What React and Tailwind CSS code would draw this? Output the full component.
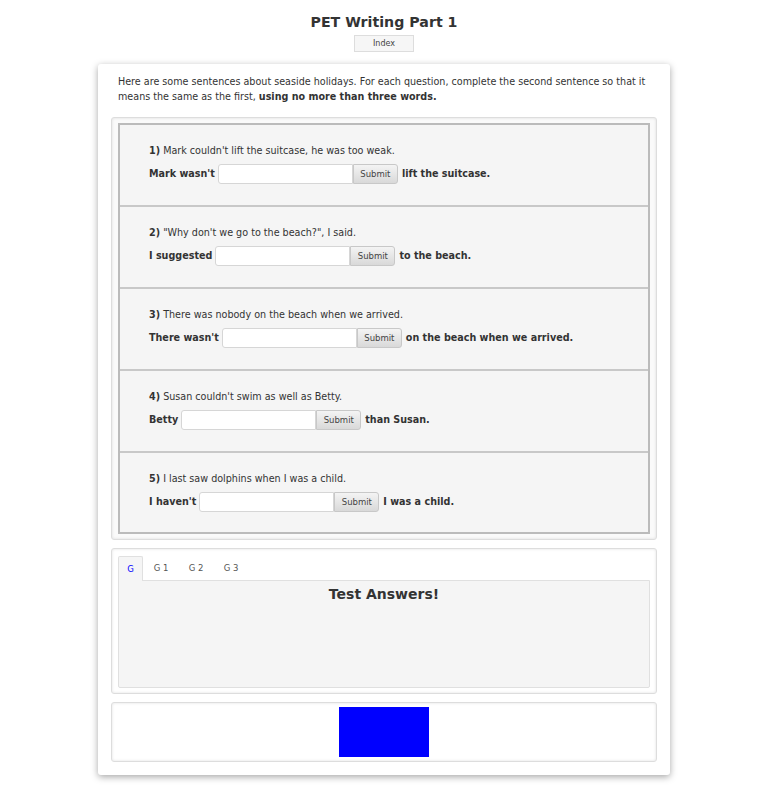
import React from "react";

const questions = [
  { n: "1)", q: "Mark couldn't lift the suitcase, he was too weak.", pre: "Mark wasn't", post: "lift the suitcase." },
  { n: "2)", q: "\"Why don't we go to the beach?\", I said.", pre: "I suggested", post: "to the beach." },
  { n: "3)", q: "There was nobody on the beach when we arrived.", pre: "There wasn't", post: "on the beach when we arrived." },
  { n: "4)", q: "Susan couldn't swim as well as Betty.", pre: "Betty", post: "than Susan." },
  { n: "5)", q: "I last saw dolphins when I was a child.", pre: "I haven't", post: "I was a child." },
];

export default function App() {
  return (
    <div className="min-h-[789px] bg-white text-[#333] font-['DejaVu_Sans',sans-serif] pb-[14px]">
      <div className="flex flex-col items-center pt-[13px]">
        <h1 className="text-[14.2px] leading-[18px] font-bold text-[#333]">PET Writing Part 1</h1>
        <div className="mt-[4px] w-[60px] h-[17px] flex items-center justify-center bg-[#f6f6f6] border border-[#ddd] text-[8px] text-[#444]">
          Index
        </div>
      </div>

      <div className="mx-auto mt-[12px] w-[572px] bg-white rounded-[3px] shadow-[0_2px_7px_rgba(0,0,0,0.35)] px-[13px] pt-[10px] pb-[13px]">
        <p className="px-[7px] text-[9.6px] leading-[15px] text-[#333]">
          Here are some sentences about seaside holidays. For each question, complete the second sentence so that it means the same as the first, <b>using no more than three words.</b>
        </p>

        <div className="mt-[13px] rounded-[3px] border border-[#ddd] shadow-[inset_0_0_3px_rgba(0,0,0,0.12)] bg-[#fafafa] px-[6px] py-[5px]">
          <div className="border-2 border-[#bbb] bg-[#f5f5f5]">
            {questions.map((it, i) => {
              const last = i === questions.length - 1;
              return (
                <div
                  key={i}
                  className={
                    last
                      ? "h-[79px] pl-[29px] pt-[18px] flex flex-col"
                      : "h-[82px] pl-[29px] pt-[18px] flex flex-col border-b-2 border-[#c8c8c8]"
                  }
                >
                  <div className="text-[9.6px] leading-[15px] text-[#333]">
                    <b>{it.n}</b> {it.q}
                  </div>
                  <div className="mt-[6px] flex items-center text-[9.6px] font-bold text-[#333]">
                    <span>{it.pre}</span>
                    <div className="ml-[3px] w-[135px] h-[20px] bg-white border border-[#d6d6d6] rounded-l-[3px]" />
                    <div className="w-[45px] h-[20px] flex items-center justify-center bg-gradient-to-b from-[#f4f4f4] to-[#d9d9d9] border border-[#c8c8c8] rounded-r-[3px] text-[8.5px] font-normal text-[#444]">
                      Submit
                    </div>
                    <span className="ml-[4px]">{it.post}</span>
                  </div>
                </div>
              );
            })}
          </div>
        </div>

        <div className="mt-[8px] rounded-[3px] border border-[#ddd] shadow-[inset_0_0_3px_rgba(0,0,0,0.12)] bg-white px-[6px] pt-[7px] pb-[5px]">
          <div className="flex items-start h-[24px] text-[8.5px]">
            <div className="relative z-10 w-[25px] h-[25px] flex items-center justify-center bg-[#f5f5f5] border border-[#e0e0e0] border-b-0 rounded-t-[2px] text-[#0000ff]">
              G
            </div>
            <div className="w-[36px] h-[24px] flex items-center justify-center text-[#555]">G 1</div>
            <div className="w-[34px] h-[24px] flex items-center justify-center text-[#555]">G 2</div>
            <div className="w-[36px] h-[24px] flex items-center justify-center text-[#555]">G 3</div>
          </div>
          <div className="h-[108px] bg-[#f5f5f5] border border-[#e0e0e0] rounded-b-[2px] flex justify-center">
            <div className="mt-[4px] text-[14px] leading-[18px] font-bold text-[#333]">Test Answers!</div>
          </div>
        </div>

        <div className="mt-[8px] rounded-[3px] border border-[#ddd] shadow-[inset_0_0_3px_rgba(0,0,0,0.12)] bg-white flex justify-center py-[4px]">
          <div className="w-[90px] h-[50px] bg-[#0000ff]" />
        </div>
      </div>
    </div>
  );
}
